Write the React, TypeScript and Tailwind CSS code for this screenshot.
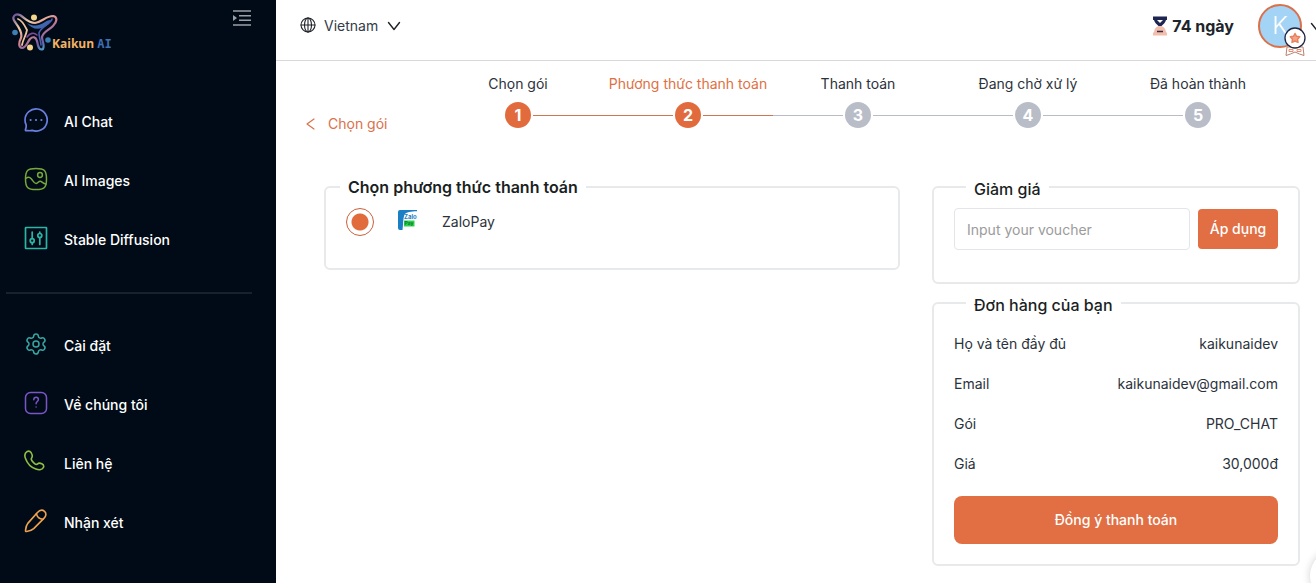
import React, { useState } from "react";
import { Settings } from "lucide-react";

const svgBase = {
  fill: "none",
  stroke: "currentColor",
  strokeLinecap: "round" as const,
  strokeLinejoin: "round" as const,
  "aria-hidden": true,
};

function ChatIcon() {
  return (
    <svg {...svgBase} viewBox="0 0 24 24" strokeWidth="1.7" className="size-6 text-[#6a7fe0]">
      <path d="M1 11.9A11.1 11.1 0 1 1 8.2 22.4C6 23 4 22.6 2.2 22.7c-.6 0-.9-.3-.8-.9C2 19.600 2.600 18.500 2 16.500A11 11 0 0 1 1 11.900Z" />
      <path d="M6.600 12h.01M12 12h.01M17.400 12h.01" strokeWidth="2.200" />
    </svg>
  );
}

function ImageIcon() {
  return (
    <svg {...svgBase} viewBox="0 0 24 24" strokeWidth="1.500" className="size-6 text-[#76a83a]">
      <path d="M12 1.500c8.500 0 10.500 2 10.500 10.500S20.500 22.500 12 22.500 1.500 20.500 1.500 12 3.500 1.500 12 1.500Z" />
      <circle cx="16" cy="8" r="2.400" />
      <path d="M1.800 11.500C4 9.700 5.600 9.800 7.200 11.700c2 2.400 3 5 5 4.800 1.800-.2 2.200-2.300 4-2.300 1.900 0 2.600 2.600 5.800 2.800" />
    </svg>
  );
}

function SlidersIcon() {
  return (
    <svg {...svgBase} viewBox="0 0 24 24" strokeWidth="1.700" className="size-6 text-[#2cb5a6]">
      <rect x="1.500" y="1.500" width="21" height="21" rx=".5" />
      <path d="M8.200 6v6.500M8.200 17v1.500M15.800 6v1.200M15.800 11.800v6.700" />
      <circle cx="8.200" cy="14.700" r="2" />
      <circle cx="15.800" cy="9.500" r="2" />
    </svg>
  );
}

function QuestionIcon() {
  return (
    <svg {...svgBase} viewBox="0 0 24 24" strokeWidth="1.500" className="size-6 text-[#7a55c8]">
      <rect x="1.500" y="1.500" width="21" height="21" rx="5" />
      <path d="M9.800 8.800c0-1.700 1-2.600 2.300-2.600s2.300.9 2.300 2.300c0 2-2.300 2-2.300 4.200M12.100 15.900v.1" />
    </svg>
  );
}

function PhoneIcon() {
  return (
    <svg {...svgBase} viewBox="0 0 24 24" strokeWidth="1.600" className="size-6 text-[#8fc043]">
      <path d="M3.200 1.500C1 2.700.3 5.200 1.400 8.300c1.900 5.300 5.700 9.200 10.500 10.800 3.400 1.100 6.700.5 7.600-1.800.6-1.600-.1-2.700-1.700-3.500-1.700-.8-3.200-.9-4.200.1-.9.8-1.800.7-3.300-.6-3.200-2.800-3.700-4-2.700-5.300.9-1.300.9-2.500.2-4C7 1.700 5.200.4 3.200 1.500Z" />
    </svg>
  );
}

function PencilIcon() {
  return (
    <svg {...svgBase} viewBox="0 0 24 24" strokeWidth="1.600" className="size-6 text-[#f0a34e]">
      <path d="M13.200 3.700c2.300-2.500 5.200-3.200 7.300-1.300 2.200 2 1.600 4.800-.6 7L9.700 19.600c-1.800 1.600-4.900 2.700-7.200 2.900-.8.100-1.200-.4-1-1.100.3-2.400 1-5.500 2.500-7.300Z" />
      <path d="M12.400 4.700c.6 3.200 3 5.300 6.600 5.500" />
    </svg>
  );
}

function Logo() {
  const body =
    "M3 10C-1 5 3 1 8 3c5 3 8 8 15 8 7-1 11-7 18-7 5 1 4 6 0 10-4 4-10 6-11 11 0 4 3 8 1 12-4 2-5-3-6-8-1-4-4-5-7-2-3 4-4 9-8 9-4-1-3-6-1-10 2-6-3-12-6-16Z";
  return (
    <svg viewBox="0 0 46 40" fill="none" strokeLinecap="round" strokeLinejoin="round" aria-hidden className="h-10 w-[46px]">
      <defs>
        <linearGradient id="ribbon" x1="0" y1="0" x2=".8" y2="1">
          <stop offset="0" stopColor="#6a4f9a" />
          <stop offset=".3" stopColor="#f0cfa4" />
          <stop offset=".55" stopColor="#d98690" />
          <stop offset=".8" stopColor="#6f5aa8" />
          <stop offset="1" stopColor="#3fb5cf" />
        </linearGradient>
      </defs>
      <path d={body} stroke="url(#ribbon)" strokeWidth="2.200" />
      <path d="M6 7c4 1 7 7 9 11-1 6-4 9-5 15" stroke="#efc39c" strokeWidth="1.800" />
      <path d="M15 11c7 4 12 3 18-1 3-2 5-2 6-2 0 3-5 6-9 8-6 2-11 0-15-5Z" fill="#3d68b0" />
      <path d="M40 7c-1 5-12 8-13 14 0 5 2 8 2 12" stroke="#4a5cae" strokeWidth="1.600" />
      <path d="M15 25c3-4 7-5 10-2" stroke="#7d4b98" strokeWidth="1.600" />
      <circle cx="22" cy="5.500" r="3" fill="#f5d58d" />
      <circle cx="3" cy="20.500" r="2.800" fill="#3d7fb5" />
      <circle cx="36" cy="28" r="2.800" fill="#3d7fb5" />
      <circle cx="18" cy="35.500" r="3" fill="#f5d58d" />
    </svg>
  );
}

function HourglassIcon() {
  return (
    <svg viewBox="0 0 16 20" aria-hidden className="h-5 w-4">
      <path d="M1 .5h14v3.500h-1C13.500 6.500 11 8.500 9.500 10h-3C5 8.500 2.500 6.500 2 4H1Z" fill="#1d2550" />
      <path d="M5 4h6L8 7Z" fill="#fff" />
      <path d="M6.500 10h3C12 11 14 13 14 16.500h1v3H1v-3h1C2 13 4 11 6.500 10Z" fill="#f2bfae" />
      <path d="M5 15.500h6" stroke="#3a2a40" strokeWidth="1.500" />
    </svg>
  );
}

function BadgeIcon() {
  return (
    <svg viewBox="0 0 22 30" fill="none" strokeLinejoin="round" aria-hidden className="h-[30px] w-[22px]">
      <path d="M3 20 2 28.500l4.500-1.500L11 25l4.500 2 4.500 1.500-1-8.500Z" fill="#fff" stroke="#b8816f" />
      <path d="M5 22.500h4v2H5ZM13 22.500h4v2h-4Z" stroke="#e58d6d" />
      <circle cx="11" cy="11" r="10" fill="#fff" stroke="#1f2544" strokeWidth="1.300" />
      <path d="m11 6.500 1.500 2.800 3.200.5-2.200 2.400.5 3.200-3-1.400-3 1.400.5-3.200-2.200-2.400 3.200-.5Z" fill="#f0a58a" stroke="#e8825e" strokeWidth="1.500" />
    </svg>
  );
}

function ZaloPayIcon() {
  return (
    <svg viewBox="0 0 20 20" aria-hidden className="size-5">
      <path d="M2 0h17v1.200C13 1.200 8 2 6.500 4.500 4.800 9 5.300 15 4.500 20H2a2 2 0 0 1-2-2V2a2 2 0 0 1 2-2Z" fill="#1a7fc4" />
      <path d="M6 10.500h10.500v6H6Z" fill="#2fd34a" />
      <text x="6" y="9.200" fontSize="6" fontWeight="700" fill="#1a7fc4" fontFamily="Inter, sans-serif">Zalo</text>
      <text x="6.500" y="15.200" fontSize="5" fontWeight="700" fill="#0c7a35" fontFamily="Inter, sans-serif">Pay</text>
    </svg>
  );
}

function Chevron({ className }: { className: string }) {
  return (
    <svg {...svgBase} viewBox="0 0 14 14" strokeWidth="1.400" className={className}>
      <path d="m1.500 3.500 5.500 7 5.500-7" />
    </svg>
  );
}

const mainLinks = [
  { label: "AI Chat", icon: <ChatIcon /> },
  { label: "AI Images", icon: <ImageIcon /> },
  { label: "Stable Diffusion", icon: <SlidersIcon /> },
];

const moreLinks = [
  { label: "Cài đặt", icon: <Settings aria-hidden strokeWidth={1.5} className="size-6 text-[#36a8a3]" /> },
  { label: "Về chúng tôi", icon: <QuestionIcon /> },
  { label: "Liên hệ", icon: <PhoneIcon /> },
  { label: "Nhận xét", icon: <PencilIcon /> },
];

const steps = ["Chọn gói", "Phương thức thanh toán", "Thanh toán", "Đang chờ xử lý", "Đã hoàn thành"];
const currentStep = 1;

const order = [
  ["Họ và tên đầy đủ", "kaikunaidev"],
  ["Email", "kaikunaidev@gmail.com"],
  ["Gói", "PRO_CHAT"],
  ["Giá", "30,000đ"],
];

function NavList({ items }: { items: { label: string; icon: React.ReactNode }[] }) {
  return (
    <ul>
      {items.map((item) => (
        <li key={item.label}>
          <a href="#" className="flex h-[59px] items-center gap-4 pl-6 text-sm font-medium text-white">
            <span className="pb-[3px]">{item.icon}</span>
            {item.label}
          </a>
        </li>
      ))}
    </ul>
  );
}

function Sidebar() {
  return (
    <aside className="w-[276px] shrink-0 bg-[#000b17]">
      <div className="flex h-[92px] items-start justify-between pt-2 pr-6 pl-3">
        <a href="#" className="flex items-start pt-1">
          <Logo />
          <span className="-ml-1.5 pt-6 font-['Open_Sans',sans-serif] text-xs leading-4 font-bold text-[#f2b365]">
            Kaikun <span className="font-['DejaVu_Sans_Mono',monospace] text-[#3f6fb5]">AI</span>
          </span>
        </a>
        <button type="button" aria-label="Menu" className="text-[#9ba1a8]">
          <svg viewBox="0 0 20 20" fill="none" stroke="currentColor" strokeWidth="1.600" aria-hidden className="size-5">
            <path d="M1 3h18M7 7.700h12M7 12.300h12M1 17h18" />
            <path d="m1 7 4 3-4 3Z" fill="currentColor" stroke="none" />
          </svg>
        </button>
      </div>
      <nav>
        <NavList items={mainLinks} />
        <hr className="mt-[23px] mr-6 mb-[22px] ml-1.5 border-t-2 border-[#18222d]" />
        <NavList items={moreLinks} />
      </nav>
    </aside>
  );
}

function Header() {
  return (
    <header className="flex h-[61px] items-start justify-between border-b border-[#d9d9d9] pt-1 pl-6">
      <div className="flex h-11 items-center gap-2">
        <span className="pb-[3px]">
          <svg {...svgBase} viewBox="0 0 16 16" strokeWidth="1.100" className="size-4 text-[#1f2328]">
            <circle cx="8" cy="8" r="7" />
            <ellipse cx="8" cy="8" rx="3.500" ry="7" />
            <path d="M1 8h14M8 1v14" />
          </svg>
        </span>
        <span className="flex items-center">
          <select aria-label="Country" className="appearance-none bg-transparent pr-[22px] text-sm text-[#333b47] outline-none">
            <option>Vietnam</option>
            <option>English</option>
          </select>
          <Chevron className="pointer-events-none -ml-3.5 size-3.5 text-[#1f2328]" />
        </span>
      </div>
      <div className="flex items-start overflow-hidden">
        <div className="mr-6 flex h-11 items-center gap-1">
          <HourglassIcon />
          <span className="text-base font-bold text-[#20242b]">74 ngày</span>
        </div>
        <button type="button" aria-label="Account" className="-mr-2 flex h-[52px] items-start">
          <span className="relative flex size-11 items-center justify-center rounded-full border-2 border-[#d9714a] bg-[#a3d3f5] text-2xl font-light text-white">
            K
            <span className="absolute top-[21px] left-6">
              <BadgeIcon />
            </span>
          </span>
          <Chevron className="mt-4 ml-2 size-3.5 text-[#1f2328]" />
        </button>
      </div>
    </header>
  );
}

function Stepper() {
  return (
    <ol className="grid flex-1 grid-cols-5">
      {steps.map((label, i) => {
        const active = i <= currentStep;
        const line = active ? "bg-[#cf7550]" : "bg-[#b9bcc4]";
        const nextLine = i < currentStep || i === currentStep ? "bg-[#cf7550]" : "bg-[#b9bcc4]";
        return (
          <li key={label} className="flex flex-col items-center gap-2">
            <span className={`text-sm whitespace-nowrap ${i === currentStep ? "text-[#e07042]" : "text-[#2c323b]"}`}>
              {label}
            </span>
            <span className="flex w-full items-center gap-0.5">
              <span className={`h-px flex-1 ${i === 0 ? "bg-transparent" : line}`} />
              <span
                className={`flex size-[26px] items-center justify-center rounded-full text-base font-bold text-white ${active ? "bg-[#e26b3e]" : "bg-[#b9bdc8]"}`}
              >
                {i + 1}
              </span>
              <span className={`h-px flex-1 ${i === steps.length - 1 ? "bg-transparent" : nextLine}`} />
            </span>
          </li>
        );
      })}
    </ol>
  );
}

export default function App() {
  const [voucher, setVoucher] = useState("");
  return (
    <div className="flex min-h-screen overflow-hidden bg-white font-['Inter',sans-serif] text-[#2c323b]">
      <Sidebar />
      <div className="min-w-0 flex-1">
        <Header />
        <main>
          <div className="flex pt-[13px] pr-[33px] pl-7">
            <a href="#" className="mt-10 flex h-5 w-[129px] items-center gap-3 text-sm text-[#d9714a]">
              <svg {...svgBase} viewBox="0 0 12 12" strokeWidth="1.200" className="size-3">
                <path d="M10 1 3 6l7 5" />
              </svg>
              Chọn gói
            </a>
            <Stepper />
          </div>
          <div className="mt-[41px] flex items-start gap-8 pr-4 pl-12">
            <fieldset className="min-w-0 flex-1 rounded-md border-2 border-[#e8e9ea] px-3.5 pb-8">
              <legend className="px-2 text-base leading-6 font-semibold text-[#1b1f24]">Chọn phương thức thanh toán</legend>
              <label className="flex items-center pt-[9px] pl-1.5 text-sm">
                <input
                  type="radio"
                  name="method"
                  defaultChecked
                  className="size-7 appearance-none rounded-full border border-[#c9603c] bg-white bg-radial from-[#e26b3e] from-[8px] to-transparent to-[9px]"
                />
                <span className="mr-6 ml-6 pb-1">
                  <ZaloPayIcon />
                </span>
                ZaloPay
              </label>
            </fieldset>
            <div className="flex w-[368px] shrink-0 flex-col gap-[7px]">
              <fieldset className="min-w-0 rounded-md border-2 border-[#e8e9ea] px-5 pb-8">
                <legend className="ml-3 px-2 pt-1 text-base leading-5 font-medium text-[#1b1f24]">Giảm giá</legend>
                <div className="flex items-center gap-2 pt-[9px]">
                  <input
                    type="text"
                    aria-label="Voucher"
                    placeholder="Input your voucher"
                    value={voucher}
                    onChange={(e) => setVoucher(e.target.value)}
                    className="h-[42px] min-w-0 flex-1 rounded border border-[#e3e5e8] px-3 text-sm outline-none placeholder:text-[#9b9b9b]"
                  />
                  <button type="button" className="h-10 w-20 rounded bg-[#e16f43] text-sm font-medium text-white">
                    Áp dụng
                  </button>
                </div>
              </fieldset>
              <fieldset className="min-w-0 rounded-md border-2 border-[#e8e9ea] px-5 pb-5">
                <legend className="ml-3 px-2 pt-1 text-base leading-5 font-medium text-[#1b1f24]">Đơn hàng của bạn</legend>
                <dl className="pt-[9px] text-sm">
                  {order.map(([name, value]) => (
                    <div key={name} className="flex h-10 items-center justify-between">
                      <dt>{name}</dt>
                      <dd>{value}</dd>
                    </div>
                  ))}
                </dl>
                <button type="button" className="mt-3 h-12 w-full rounded-lg bg-[#e16f43] text-sm font-medium text-white">
                  Đồng ý thanh toán
                </button>
              </fieldset>
            </div>
          </div>
        </main>
      </div>
      <button
        type="button"
        aria-label="Support"
        className="fixed -right-12 -bottom-5 size-[54px] rounded-full bg-white shadow-[0_0_8px_rgba(0,0,0,0.18)]"
      />
    </div>
  );
}
